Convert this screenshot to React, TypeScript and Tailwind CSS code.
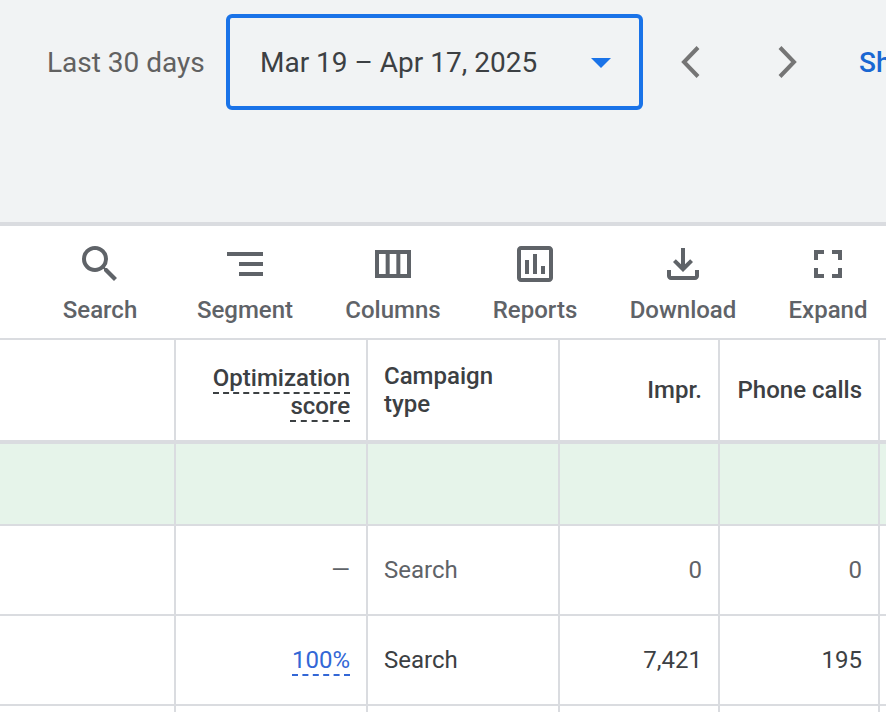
const tools = [
  { label: 'Search', width: 'w-[94px]', d: 'M15.5 14h-.79l-.28-.27A6.471 6.471 0 0 0 16 9.5 6.5 6.5 0 1 0 9.5 16c1.61 0 3.09-.59 4.23-1.57l.27.28v.79l5 4.99L20.49 19l-4.99-5zm-6 0C7.01 14 5 11.99 5 9.5S7.01 5 9.5 5 14 7.01 14 9.5 11.99 14 9.5 14z' },
  { label: 'Segment', width: 'w-[100px]', d: 'M9 18h12v-2H9v2zM3 6v2h18V6H3zm6 7h12v-2H9v2z' },
  { label: 'Columns', width: 'w-[100px]', d: 'M3 5v14h18V5H3zm5.33 12H5V7h3.33v10zm5.34 0h-3.33V7h3.33v10zM19 17h-3.33V7H19v10z' },
  { label: 'Reports', width: 'w-[88px]', d: 'M19 3H5c-1.1 0-2 .9-2 2v14c0 1.1.9 2 2 2h14c1.1 0 2-.9 2-2V5c0-1.1-.9-2-2-2zm0 16H5V5h14v14zM7 10h2v7H7zm4-3h2v10h-2zm4 6h2v4h-2z' },
  { label: 'Download', width: 'w-[112px]', d: 'M18 15v3H6v-3H4v3c0 1.1.9 2 2 2h12c1.1 0 2-.9 2-2v-3h-2zm-1-4-1.41-1.41L13 12.17V4h-2v8.17L8.41 9.59 7 11l5 5 5-5z' },
  { label: 'Expand', width: 'w-[82px]', d: 'M7 14H5v5h5v-2H7v-3zm-2-4h2V7h3V5H5v5zm12 7h-3v2h5v-5h-2v3zM14 5v2h3v3h2V5h-5z' },
];

const rows = [
  { score: '—', type: 'Search', impr: '0', calls: '0', paused: true },
  { score: '100%', type: 'Search', impr: '7,421', calls: '195', paused: false },
];

const cell = 'border-r-2 border-b-2 border-[#dadce0] px-4';
const head = 'border-r-2 border-b-4 border-[#dadce0] px-4 font-medium';

function DateBar() {
  return (
    <header className="flex h-[226px] items-start overflow-hidden border-b-4 border-[#dadce0] bg-[#f1f3f4] pt-3.5 text-[28px] leading-8">
      <div className="flex h-24 shrink-0 items-center pl-[47px]">
        <span className="w-[179px] pt-0.5 whitespace-nowrap text-[#616161]">Last 30 days</span>
        <button className="flex h-24 w-[417px] items-center justify-between rounded-md border-4 border-[#1a73e8] pt-0.5 pr-7 pl-[30px] whitespace-nowrap text-[#3c4043]">
          Mar 19 – Apr 17, 2025
          <svg className="h-2.5 w-5" viewBox="0 0 20 10" fill="#1a73e8"><path d="M0 0h20L10 10z" /></svg>
        </button>
        <button aria-label="Previous period" className="flex h-24 w-24 items-center justify-center">
          <svg className="size-12" viewBox="0 0 48 48" fill="none" stroke="#757575" strokeWidth="4"><path d="M31 9.5L17 24l14 14.5" /></svg>
        </button>
        <button aria-label="Next period" className="flex h-24 w-24 items-center justify-center">
          <svg className="size-12" viewBox="0 0 48 48" fill="none" stroke="#757575" strokeWidth="4"><path d="M17 9.5L31 24 17 38.5" /></svg>
        </button>
        <button className="ml-6 pt-0.5 font-medium whitespace-nowrap text-[#1967d2]">Show</button>
      </div>
    </header>
  );
}

function Toolbar() {
  return (
    <div className="flex gap-12 border-b-2 border-[#dadce0] py-3.5 pl-[53px] text-[#5f6368]">
      {tools.map(t => (
        <button key={t.label} className={`flex shrink-0 flex-col items-center gap-2 text-2xl leading-7 font-medium ${t.width}`}>
          <svg className="size-12" viewBox="0 0 24 24" fill="currentColor"><path d={t.d} /></svg>
          {t.label}
        </button>
      ))}
    </div>
  );
}

export default function App() {
  return (
    <div className="h-screen overflow-hidden bg-white font-['Roboto',sans-serif]">
      <DateBar />
      <Toolbar />
      <table className="w-full table-fixed border-separate border-spacing-0 text-2xl leading-7 text-[#3c4043]">
        <colgroup>
          <col className="w-[176px]" />
          <col className="w-[192px]" />
          <col className="w-[192px]" />
          <col className="w-[160px]" />
          <col className="w-[160px]" />
          <col />
        </colgroup>
        <thead>
          <tr className="h-[104px]">
            <td className={head}></td>
            <th scope="col" className={`${head} pt-1 text-right`}>
              <span className="border-b-2 border-dashed border-[#3c4043]">Optimization<br />score</span>
            </th>
            <th scope="col" className={`${head} text-left`}>Campaign<br />type</th>
            <th scope="col" className={`${head} text-right`}>Impr.</th>
            <th scope="col" className={`${head} text-right whitespace-nowrap`}>Phone calls</th>
            <td className="border-b-4 border-[#dadce0]"></td>
          </tr>
        </thead>
        <tbody>
          <tr className="h-[82px] bg-[#e6f4ea]">
            <td className={cell}></td>
            <td className={cell}></td>
            <td className={cell}></td>
            <td className={cell}></td>
            <td className={cell}></td>
            <td className="border-b-2 border-[#dadce0]"></td>
          </tr>
          {rows.map(r => (
            <tr key={r.impr} className={`h-[90px] ${r.paused ? 'text-[#5f6368]' : ''}`}>
              <td className={cell}></td>
              <td className={`${cell} text-right`}>
                {r.paused ? r.score : <a href="#score" className="border-b-2 border-dashed border-[#3367d6] text-[#3367d6]">{r.score}</a>}
              </td>
              <td className={cell}>{r.type}</td>
              <td className={`${cell} text-right`}>{r.impr}</td>
              <td className={`${cell} text-right`}>{r.calls}</td>
              <td className="border-b-2 border-[#dadce0]"></td>
            </tr>
          ))}
          <tr className="h-[90px]">
            <td className={cell}></td>
            <td className={cell}></td>
            <td className={cell}></td>
            <td className={cell}></td>
            <td className={cell}></td>
            <td></td>
          </tr>
        </tbody>
      </table>
    </div>
  );
}
